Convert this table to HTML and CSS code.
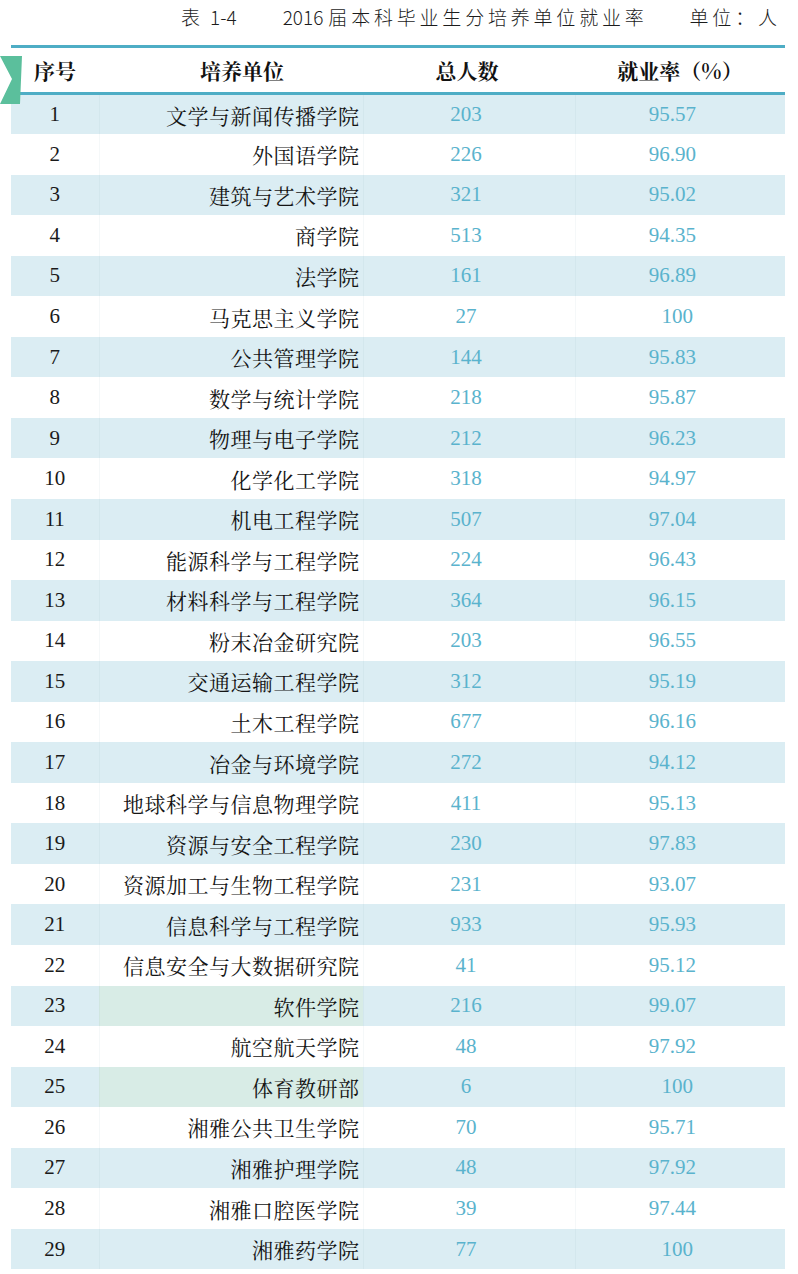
FILE: index.html
```html
<!DOCTYPE html>
<html lang="zh-CN">
<head>
<meta charset="utf-8">
<title>2016 届本科毕业生分培养单位就业率</title>
<link rel="stylesheet" href="styles.css">
</head>
<body>
<div class="page">
  <div class="title">
    <span class="t-no"><span class="cj">表</span> 1-4</span>
    <span class="t-main"><span class="yr">2016</span><span class="cj">届本科毕业生分培养单位就业率</span></span>
    <span class="t-unit cj">单位：人</span>
  </div>
  <div class="flag"></div>
  <table class="tbl">
    <colgroup>
      <col class="c1"><col class="c2"><col class="c3"><col class="c4">
    </colgroup>
    <thead>
      <tr>
        <th class="h-seq">序号</th>
        <th class="h-name">培养单位</th>
        <th class="h-total">总人数</th>
        <th class="h-rate">就业率（%）</th>
      </tr>
    </thead>
    <tbody>
      <tr class="odd"><td class="seq">1</td><td class="name">文学与新闻传播学院</td><td class="total">203</td><td class="rate">95.57</td></tr>
      <tr><td class="seq">2</td><td class="name">外国语学院</td><td class="total">226</td><td class="rate">96.90</td></tr>
      <tr class="odd"><td class="seq">3</td><td class="name">建筑与艺术学院</td><td class="total">321</td><td class="rate">95.02</td></tr>
      <tr><td class="seq">4</td><td class="name">商学院</td><td class="total">513</td><td class="rate">94.35</td></tr>
      <tr class="odd"><td class="seq">5</td><td class="name">法学院</td><td class="total">161</td><td class="rate">96.89</td></tr>
      <tr><td class="seq">6</td><td class="name">马克思主义学院</td><td class="total">27</td><td class="rate r100">100</td></tr>
      <tr class="odd"><td class="seq">7</td><td class="name">公共管理学院</td><td class="total">144</td><td class="rate">95.83</td></tr>
      <tr><td class="seq">8</td><td class="name">数学与统计学院</td><td class="total">218</td><td class="rate">95.87</td></tr>
      <tr class="odd"><td class="seq">9</td><td class="name">物理与电子学院</td><td class="total">212</td><td class="rate">96.23</td></tr>
      <tr><td class="seq">10</td><td class="name">化学化工学院</td><td class="total">318</td><td class="rate">94.97</td></tr>
      <tr class="odd"><td class="seq">11</td><td class="name">机电工程学院</td><td class="total">507</td><td class="rate">97.04</td></tr>
      <tr><td class="seq">12</td><td class="name">能源科学与工程学院</td><td class="total">224</td><td class="rate">96.43</td></tr>
      <tr class="odd"><td class="seq">13</td><td class="name">材料科学与工程学院</td><td class="total">364</td><td class="rate">96.15</td></tr>
      <tr><td class="seq">14</td><td class="name">粉末冶金研究院</td><td class="total">203</td><td class="rate">96.55</td></tr>
      <tr class="odd"><td class="seq">15</td><td class="name">交通运输工程学院</td><td class="total">312</td><td class="rate">95.19</td></tr>
      <tr><td class="seq">16</td><td class="name">土木工程学院</td><td class="total">677</td><td class="rate">96.16</td></tr>
      <tr class="odd"><td class="seq">17</td><td class="name">冶金与环境学院</td><td class="total">272</td><td class="rate">94.12</td></tr>
      <tr><td class="seq">18</td><td class="name">地球科学与信息物理学院</td><td class="total">411</td><td class="rate">95.13</td></tr>
      <tr class="odd"><td class="seq">19</td><td class="name">资源与安全工程学院</td><td class="total">230</td><td class="rate">97.83</td></tr>
      <tr><td class="seq">20</td><td class="name">资源加工与生物工程学院</td><td class="total">231</td><td class="rate">93.07</td></tr>
      <tr class="odd"><td class="seq">21</td><td class="name">信息科学与工程学院</td><td class="total">933</td><td class="rate">95.93</td></tr>
      <tr><td class="seq">22</td><td class="name">信息安全与大数据研究院</td><td class="total">41</td><td class="rate">95.12</td></tr>
      <tr class="odd"><td class="seq">23</td><td class="name tint">软件学院</td><td class="total">216</td><td class="rate">99.07</td></tr>
      <tr><td class="seq">24</td><td class="name">航空航天学院</td><td class="total">48</td><td class="rate">97.92</td></tr>
      <tr class="odd"><td class="seq">25</td><td class="name tint">体育教研部</td><td class="total">6</td><td class="rate r100">100</td></tr>
      <tr><td class="seq">26</td><td class="name">湘雅公共卫生学院</td><td class="total">70</td><td class="rate">95.71</td></tr>
      <tr class="odd"><td class="seq">27</td><td class="name">湘雅护理学院</td><td class="total">48</td><td class="rate">97.92</td></tr>
      <tr><td class="seq">28</td><td class="name">湘雅口腔医学院</td><td class="total">39</td><td class="rate">97.44</td></tr>
      <tr class="odd"><td class="seq">29</td><td class="name">湘雅药学院</td><td class="total">77</td><td class="rate r100">100</td></tr>
    </tbody>
  </table>
</div>
</body>
</html>
```

FILE: styles.css
```css
html, body {
  margin: 0;
  padding: 0;
  background: #ffffff;
}

.page {
  position: relative;
  width: 798px;
}

.title {
  display: flex;
  align-items: center;
  height: 33px;
  padding-left: 181px;
  box-sizing: border-box;
  font-family: "Noto Sans CJK SC", "DejaVu Sans", sans-serif;
  font-weight: 300;
  font-size: 19px;
  color: #1c1c1c;
  margin-bottom: 12px;
  white-space: pre;
}

.t-no {
  word-spacing: 2px;
}

.cj {
  letter-spacing: 3.8px;
}

.yr {
  margin-right: 5px;
}

.t-main {
  margin-left: 46px;
}

.t-unit {
  margin-left: 42px;
}

.flag {
  position: absolute;
  left: 0;
  top: 56px;
  width: 22px;
  height: 48px;
  background: #5bbf9c;
  clip-path: polygon(0 0, 22px 0, 20px 48px, 0 48px, 12px 23px);
  z-index: 2;
}

.tbl {
  margin-left: 11px;
  width: 774px;
  border-collapse: collapse;
  table-layout: fixed;
  border-top: 3px solid #4eadc5;
}

.c1 { width: 88px; }
.c2 { width: 264px; }
.c3 { width: 212px; }
.c4 { width: 210px; }

thead tr {
  height: 47px;
  border-bottom: 3px solid #4eadc5;
}

th {
  font-family: "Noto Serif CJK SC", "Noto Sans CJK SC", serif;
  font-weight: 700;
  font-size: 21px;
  color: #111111;
  text-align: center;
  padding: 0;
  vertical-align: middle;
}

.h-seq { padding-left: 0; }
.h-name { padding-left: 22px; }
.h-total { padding-right: 4px; }
.h-rate { padding-right: 0; }

tbody tr {
  height: 40.55px;
}

tbody tr.odd {
  background: #dbedf3;
}

td {
  padding: 0;
  vertical-align: middle;
  border-right: 1px solid rgba(110, 160, 175, 0.07);
}

td:last-child {
  border-right: none;
}

.seq {
  font-family: "Liberation Serif", "Times New Roman", serif;
  font-size: 21px;
  color: #1a1a1a;
  text-align: center;
}

.name {
  font-family: "Noto Serif CJK SC", "Noto Sans CJK SC", serif;
  font-size: 21px;
  color: #141414;
  text-align: right;
  padding-right: 3px;
  letter-spacing: 0.5px;
}

.name.tint {
  background: #d8ece6;
}

.total, .rate {
  font-family: "Liberation Serif", "Times New Roman", serif;
  font-size: 21px;
  color: #5ab3cd;
  text-align: center;
}

.total {
  padding-right: 6px;
}

.rate {
  padding-right: 16px;
}

.rate.r100 {
  padding-right: 6px;
}
```
